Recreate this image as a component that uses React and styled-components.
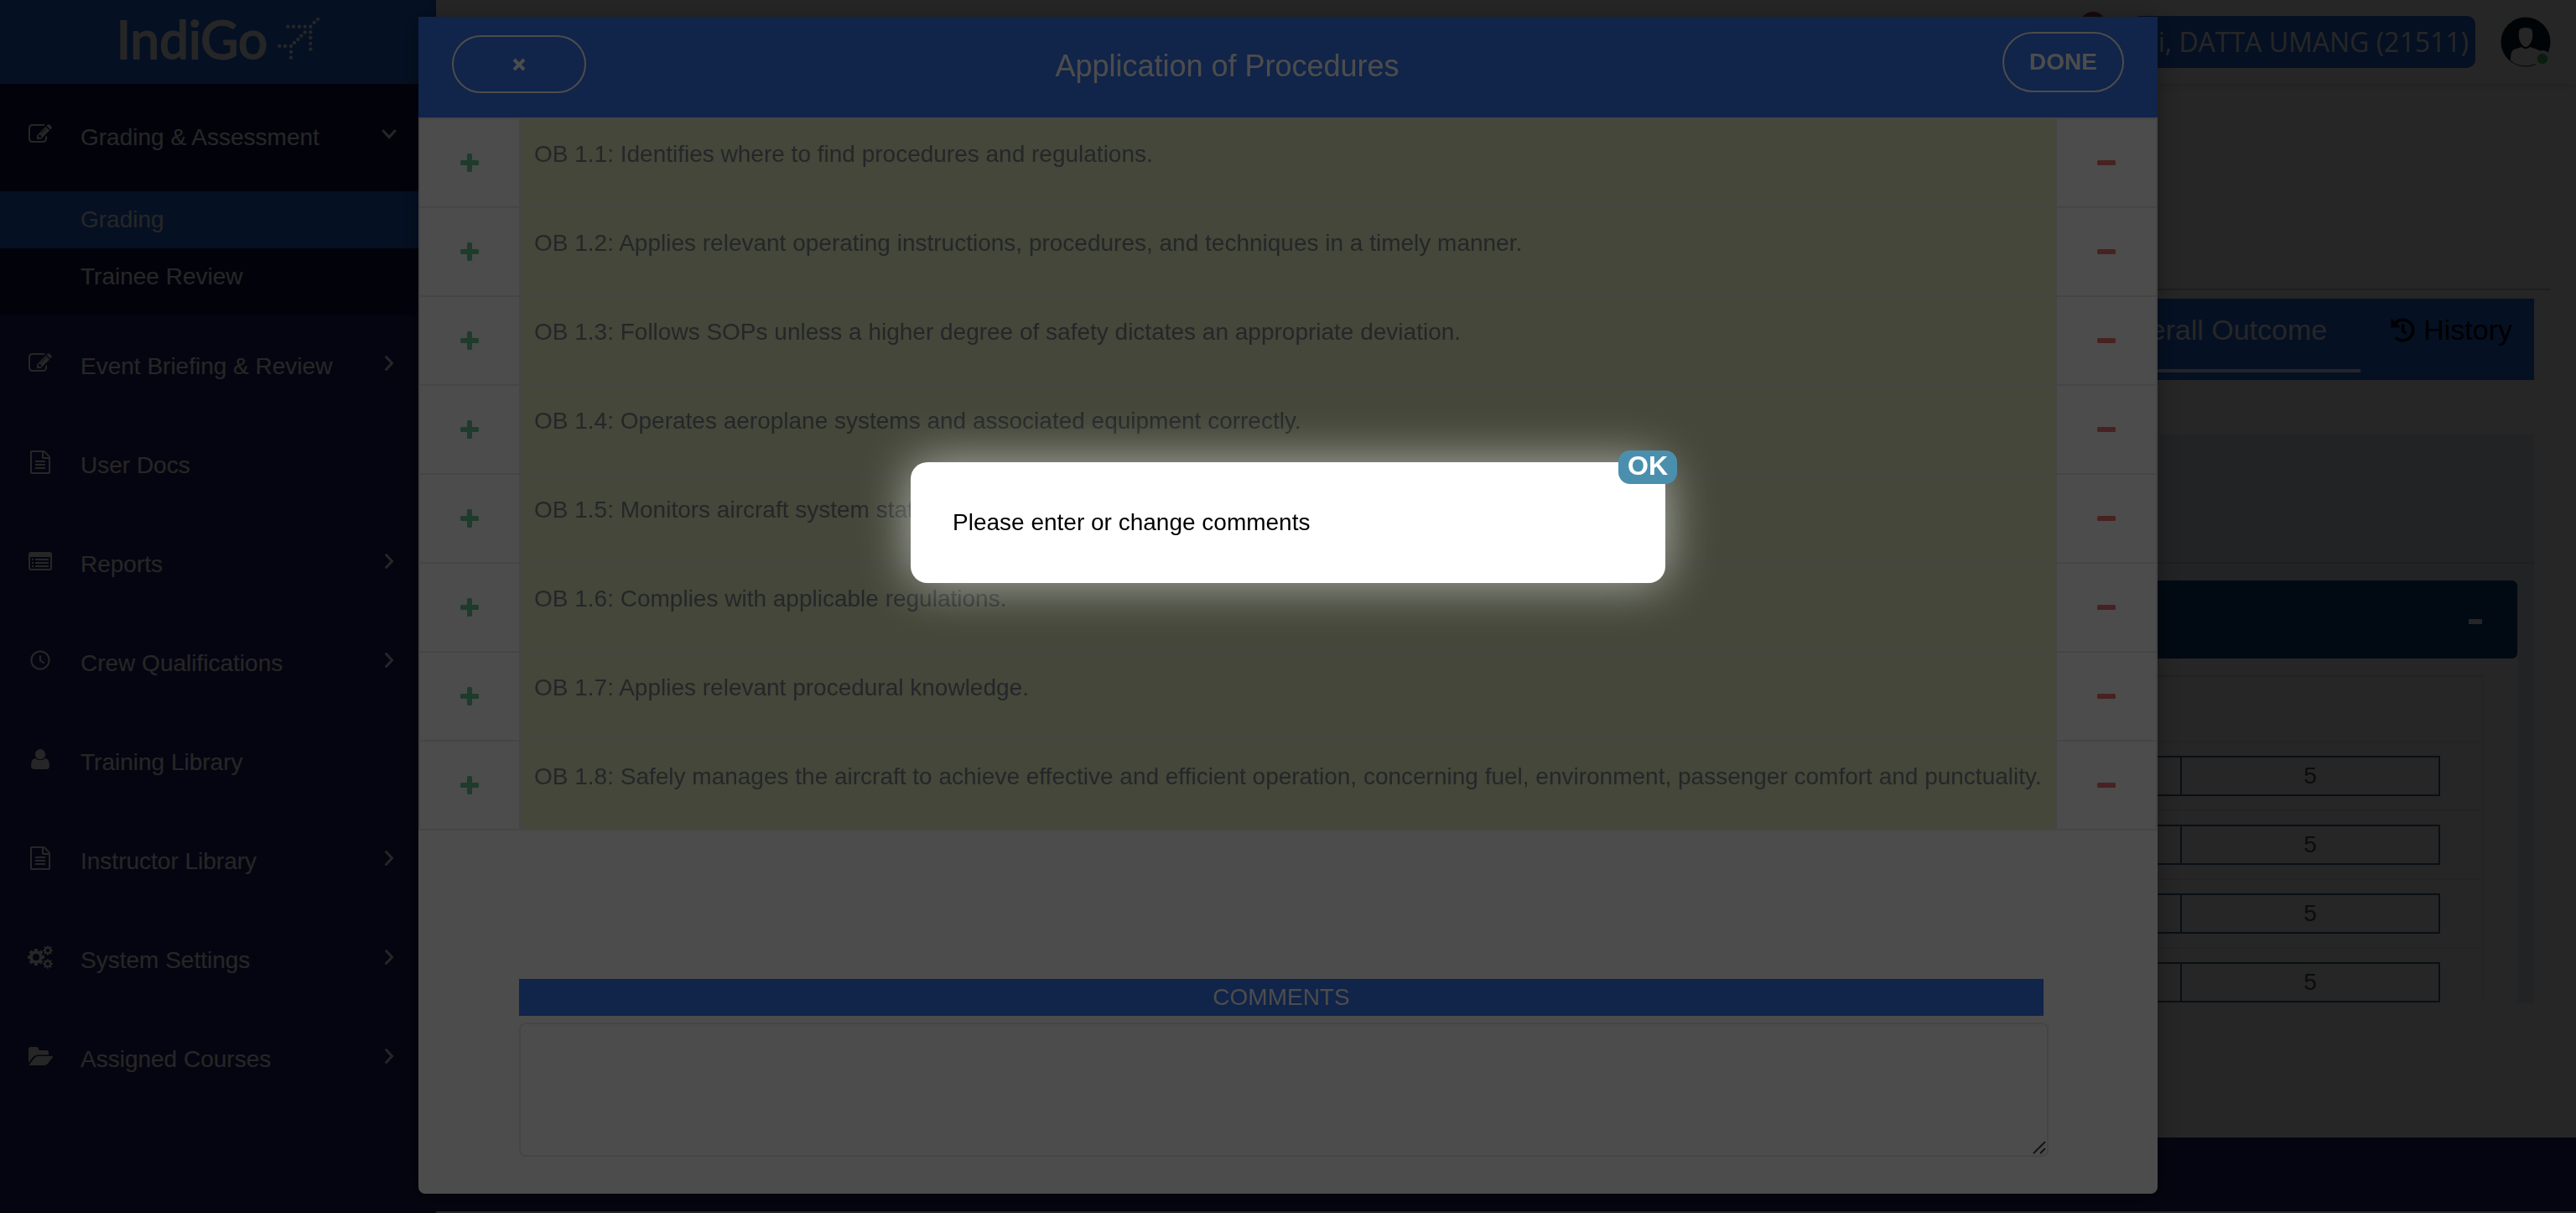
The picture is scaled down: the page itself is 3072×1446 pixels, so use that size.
import React from "react";
import styled, { createGlobalStyle } from "styled-components";
import { FaHistory } from "react-icons/fa";

const GlobalStyle = createGlobalStyle`
  * { box-sizing: border-box; }
  body {
    margin: 0;
    background: #fff;
    font-family: "Liberation Sans", Arial, Helvetica, sans-serif;
    font-size: 28px;
    line-height: 32px;
    color: #505050;
  }
  a { color: inherit; text-decoration: none; }
  button, textarea { font: inherit; }
`;

const color = {
  brand: "#226ce6",
  sidebar: "#242470",
  submenu: "#11114a",
  navy: "#0d437f",
  modalBlue: "#397bf5",
  panel: "#e3e9f0",
};

/* ---------- page shell ---------- */

const Shell = styled.div`
  display: flex;
  min-height: 100vh;
`;

const Sidebar = styled.aside`
  flex: 0 0 520px;
  background: ${color.sidebar};
  color: #fff;
`;

const Brand = styled.a`
  display: flex;
  align-items: center;
  justify-content: center;
  gap: 12px;
  height: 100px;
  padding-bottom: 8px;
  background: ${color.brand};
`;

const BrandName = styled.span`
  font-family: Lato, "Liberation Sans", sans-serif;
  font-size: 62px;
  line-height: 64px;
  -webkit-text-stroke: 2px #fff;
`;

const NavList = styled.ul`
  list-style: none;
  margin: 0;
  padding: 0;
`;

const NavLink = styled.a`
  display: flex;
  align-items: center;
  height: ${(p) => (p.$open ? "128px" : "118px")};
  padding: 0 46px 0 33px;
  background: ${(p) => (p.$open ? color.submenu : "transparent")};
`;

const NavIcon = styled.span`
  display: flex;
  flex: 0 0 30px;
  justify-content: center;
  margin: 0 33px 8px 0;
`;

const NavLabel = styled.span`
  flex: 1;
`;

const NavArrow = styled.span`
  display: flex;
  flex: 0 0 20px;
  justify-content: center;
  margin-bottom: 8px;
`;

const SubMenu = styled.ul`
  list-style: none;
  margin: 0 0 2px;
  padding: 0 0 12px;
  background: ${color.submenu};
`;

const SubLink = styled.a`
  display: flex;
  align-items: center;
  height: 68px;
  padding-left: 96px;
  background: ${(p) => (p.$active ? color.brand : "transparent")};
`;

const Main = styled.div`
  display: flex;
  flex: 1;
  flex-direction: column;
  min-width: 0;
`;

const TopBar = styled.header`
  display: flex;
  align-items: center;
  justify-content: flex-end;
  gap: 30px;
  height: 100px;
  padding: 0 30px;
  box-shadow: 0 2px 10px rgba(0, 0, 0, 0.15);
`;

const Bell = styled.span`
  align-self: flex-start;
  width: 32px;
  height: 32px;
  margin-top: 14px;
  border-radius: 50%;
  background: #a04040;
`;

const UserPill = styled.span`
  padding: 0 8px;
  border-radius: 10px;
  background: ${color.brand};
  color: #fff;
  font-family: "Open Sans", "Noto Sans", sans-serif;
  font-size: 32px;
  line-height: 62px;
`;

const Content = styled.main`
  flex: 1;
  padding: 244px 30px 160px;
`;

const Rule = styled.hr`
  height: 2px;
  margin: 0 0 10px;
  border: 0;
  background: #c6c6c6;
`;

const TabBar = styled.nav`
  display: flex;
  justify-content: flex-end;
  height: 97px;
  margin: 0 20px;
  padding-right: 26px;
  background: ${color.brand};
  font-size: 34px;
`;

const Tab = styled.a`
  display: flex;
  align-items: center;
  gap: 10px;
  height: 88px;
  padding: 0 ${(p) => (p.$active ? "40px" : "0")} 10px;
  margin-right: ${(p) => (p.$active ? "36px" : "0")};
  border-bottom: 4px solid ${(p) => (p.$active ? "#fff" : "transparent")};
  color: ${(p) => (p.$active ? "#fff" : "#000")};
`;

const Panel = styled.section`
  height: 678px;
  margin: 65px 20px 0;
  overflow: hidden;
  background: ${color.panel};
`;

const PanelHead = styled.div`
  height: 154px;
  border-bottom: 2px solid #cacfd6;
`;

const Group = styled.div`
  margin: 20px 20px 0;
  background: #fff;
`;

const GroupHead = styled.div`
  display: flex;
  align-items: center;
  justify-content: flex-end;
  height: 93px;
  padding-right: 42px;
  border-radius: 6px;
  background: ${color.navy};
`;

const GroupToggle = styled.button`
  width: 16px;
  height: 6px;
  margin-top: 4px;
  padding: 0;
  border: 0;
  background: #fff;
`;

const Scores = styled.div`
  margin: 20px 40px 0;
  border: 2px solid #ececec;
  border-top-color: #e0e0e0;
`;

const ScoresHead = styled.div`
  height: 76px;
`;

const ScoreRow = styled.div`
  display: grid;
  grid-template-columns: 1fr 308px;
  padding: 16px 50px;
  border-top: 2px solid #e6e6e6;
  text-align: center;
`;

const ScoreCell = styled.div`
  height: 48px;
  border: 2px solid #40648c;
  line-height: 44px;

  & + & {
    border-left: 0;
  }
`;

const Footer = styled.footer`
  height: 90px;
  border-bottom: 2px solid #fff;
  background: ${color.sidebar};
`;

/* ---------- observations dialog ---------- */

const Backdrop = styled.div`
  position: fixed;
  inset: 0;
  display: flex;
  align-items: flex-start;
  justify-content: center;
  padding-top: 20px;
  background: rgba(0, 0, 0, 0.5);
`;

const Dialog = styled.section`
  width: 100%;
  max-width: 2074px;
  border-radius: 0 0 8px 8px;
  background: #fff;
  box-shadow: 0 4px 30px rgba(0, 0, 0, 0.35);
`;

const DialogHead = styled.header`
  display: flex;
  align-items: flex-start;
  height: 120px;
  padding: 18px 40px;
  background: ${color.modalBlue};
  color: #fff;
`;

const PillButton = styled.button`
  display: flex;
  align-items: center;
  justify-content: center;
  width: ${(p) => (p.$wide ? "160px" : "145px")};
  height: ${(p) => (p.$wide ? "69px" : "72px")};
  margin-top: ${(p) => (p.$wide ? "4px" : "0")};
  padding: 0;
  border: 2px solid #fff;
  border-radius: 36px;
  background: transparent;
  color: #fff;
  font-weight: bold;
`;

const DialogTitle = styled.h2`
  flex: 1;
  margin: 0;
  padding-right: 160px;
  font-size: 36px;
  font-weight: normal;
  line-height: 82px;
  text-align: center;
`;

const ObTable = styled.table`
  width: 100%;
  border-collapse: collapse;
  table-layout: fixed;

  td {
    height: 106px;
    padding: 0;
    border: 2px solid #e6e6ea;
    text-align: center;
    vertical-align: middle;
  }

  td:first-child,
  td:last-child {
    width: 119px;
  }

  td:nth-child(2) {
    padding: 20px 16px;
    background: #e3edbe;
    color: #7b7f8a;
    line-height: 44px;
    text-align: left;
    vertical-align: top;
    white-space: nowrap;
  }
`;

const MarkButton = styled.button`
  display: inline-flex;
  padding: 8px;
  border: 0;
  background: transparent;
  color: ${(p) => (p.$positive ? "#67c694" : "#f06e70")};
  vertical-align: top;
`;

const Comments = styled.div`
  padding: 177px 130px 44px 120px;
`;

const CommentsLabel = styled.label`
  display: block;
  margin: 0 6px 8px 0;
  background: ${color.modalBlue};
  color: #fff;
  line-height: 44px;
  text-align: center;
`;

const CommentsField = styled.div`
  position: relative;
`;

const CommentsBox = styled.textarea`
  display: block;
  width: 100%;
  height: 160px;
  padding: 12px;
  border: 2px solid #e6e6ea;
  border-radius: 8px;
  background: #fff;
  outline: none;
  resize: none;
`;

const Grip = styled.svg`
  position: absolute;
  right: 3px;
  bottom: 3px;
`;

/* ---------- alert ---------- */

const AlertLayer = styled.div`
  position: fixed;
  inset: 0;
  display: flex;
  align-items: flex-start;
  justify-content: center;
  padding-top: 551px;
  background: rgba(0, 0, 0, 0.7);
`;

const Alert = styled.div`
  position: relative;
  width: 900px;
  padding: 56px 50px;
  border-radius: 20px;
  background: #fff;
  box-shadow: 0 0 60px rgba(255, 255, 255, 0.6);
  color: #000;
`;

const AlertText = styled.p`
  margin: 0;
`;

const OkButton = styled.button`
  position: absolute;
  top: -14px;
  right: -14px;
  width: 70px;
  height: 40px;
  padding: 0 0 4px;
  border: 0;
  border-radius: 14px;
  background: #4a90ae;
  color: #fff;
  font-size: 32px;
  font-weight: bold;
  line-height: 36px;
`;

/* ---------- drawings ---------- */

const routeDots = [
  [7, 102], [27, 102], [48, 102], [48, 123], [48, 143], [60, 90], [73, 78],
  [85, 65], [98, 52], [37, 32], [57, 32], [78, 32], [98, 32], [118, 32],
  [131, 18], [144, 6], [118, 52], [118, 72], [118, 93], [118, 113],
];

const Plane = () => (
  <svg width="50" height="50" viewBox="0 0 150 150" fill="#fff" aria-hidden="true">
    {routeDots.map(([x, y]) => (
      <circle key={`${x}-${y}`} cx={x} cy={y} r="6.5" />
    ))}
  </svg>
);

const EditIcon = () => (
  <svg width="28" height="28" viewBox="0 0 1792 1792" fill="currentColor" aria-hidden="true">
    <path d="M888 1184l116-116-152-152-116 116v56h96v96h56zm440-720q-16-16-33 1l-350 350q-17 17-1 33t33-1l350-350q17-17 1-33zm80 594v190q0 119-84.5 203.5t-203.5 84.5h-832q-119 0-203.5-84.5t-84.5-203.5v-832q0-119 84.5-203.5t203.5-84.5h832q63 0 117 25 15 7 18 23 3 17-9 29l-49 49q-14 14-32 8-23-6-45-6h-832q-66 0-113 47t-47 113v832q0 66 47 113t113 47h832q66 0 113-47t47-113v-126q0-13 9-22l64-64q15-15 35-7t20 29zm-96-738l288 288-672 672h-288v-288zm444 132l-92 92-288-288 92-92q28-28 68-28t68 28l152 152q28 28 28 68t-28 68z" />
  </svg>
);

const FileIcon = () => (
  <svg width="28" height="28" viewBox="0 0 1792 1792" fill="currentColor" aria-hidden="true">
    <path d="M1596 380q28 28 48 76t20 88v1152q0 40-28 68t-68 28h-1344q-40 0-68-28t-28-68v-1600q0-40 28-68t68-28h896q40 0 88 20t76 48zm-444-244v376h376q-10-29-22-41l-313-313q-12-12-41-22zm384 1528v-1024h-416q-40 0-68-28t-28-68v-416h-768v1536h1280zm-1024-864q0-14 9-23t23-9h704q14 0 23 9t9 23v64q0 14-9 23t-23 9h-704q-14 0-23-9t-9-23v-64zm736 224q14 0 23 9t9 23v64q0 14-9 23t-23 9h-704q-14 0-23-9t-9-23v-64q0-14 9-23t23-9h704zm0 256q14 0 23 9t9 23v64q0 14-9 23t-23 9h-704q-14 0-23-9t-9-23v-64q0-14 9-23t23-9h704z" />
  </svg>
);

const ListIcon = () => (
  <svg width="28" height="22" viewBox="0 0 28 22" fill="currentColor" aria-hidden="true">
    <path fillRule="evenodd" d="M3 0h22a3 3 0 0 1 3 3v16a3 3 0 0 1-3 3H3a3 3 0 0 1-3-3V3a3 3 0 0 1 3-3zM2 6v13q0 1 1 1h22q1 0 1-1V6z" />
    {[8, 12, 16].map((y) => (
      <path key={y} d={`M4 ${y}h2v2H4zM8 ${y}h16v2H8z`} />
    ))}
  </svg>
);

const ClockIcon = () => (
  <svg width="24" height="24" viewBox="0 0 24 24" fill="none" stroke="currentColor" strokeWidth="2" aria-hidden="true">
    <circle cx="12" cy="12" r="10.6" />
    <path d="M12 6.5v6l5 3" />
  </svg>
);

const UserIcon = () => (
  <svg width="22" height="24" viewBox="0 0 22 24" fill="currentColor" aria-hidden="true">
    <circle cx="11" cy="6.2" r="6.1" />
    <path d="M5 11q2.5 2.3 6 2.3t6-2.3q5 0.5 5 9 0 4-4 4H4q-4 0-4-4 0-8.5 5-9z" />
  </svg>
);

const Gear = ({ x, y, outer, body, hole, tooth }) => (
  <g transform={`translate(${x} ${y})`}>
    <circle r={(body + hole) / 2} fill="none" stroke="currentColor" strokeWidth={body - hole} />
    {[0, 45, 90, 135, 180, 225, 270, 315].map((a) => (
      <rect key={a} x={-tooth / 2} y={-outer} width={tooth} height={outer - body + 1} rx="0.5" transform={`rotate(${a})`} />
    ))}
  </g>
);

const CogsIcon = () => (
  <svg width="30" height="28" viewBox="0 0 30 28" fill="currentColor" aria-hidden="true">
    <Gear x={10} y={14} outer={10} body={7.8} hole={4} tooth={4} />
    <Gear x={24} y={6} outer={5.8} body={4.4} hole={2.2} tooth={2} />
    <Gear x={24} y={22} outer={5.8} body={4.4} hole={2.2} tooth={2} />
  </svg>
);

const FolderIcon = () => (
  <svg width="29" height="22" viewBox="0 0 29 22" fill="currentColor" aria-hidden="true">
    <path d="M0 19V3a3 3 0 0 1 3-3h6a3 3 0 0 1 3 3v1h9a3 3 0 0 1 3 3v2.5H11q-3.5 0-5.5 2.5z" />
    <path d="M1 21l6-7.8Q8.8 11 11.5 11h16.7q1.3 0.4 0.3 1.8L23 20q-1.7 2-4.3 2H2q-1.5 0-1-1z" />
  </svg>
);

const Chevron = ({ down }) =>
  down ? (
    <svg width="20" height="14" viewBox="0 0 20 14" fill="none" stroke="currentColor" strokeWidth="3" strokeLinecap="round" aria-hidden="true">
      <path d="M3 3l7 7.5 7-7.5" />
    </svg>
  ) : (
    <svg width="12" height="20" viewBox="0 0 12 20" fill="none" stroke="currentColor" strokeWidth="3" strokeLinecap="round" aria-hidden="true">
      <path d="M2.500 2.500L9.500 10l-7 7.500" />
    </svg>
  );

const PlusIcon = () => (
  <svg width="22" height="22" viewBox="0 0 22 22" fill="currentColor" aria-hidden="true">
    <path d="M8 1.500Q8 0 9.500 0h3Q14 0 14 1.500V8h6.500Q22 8 22 9.500v3q0 1.500-1.500 1.500H14v6.500q0 1.500-1.500 1.500h-3Q8 22 8 20.500V14H1.500Q0 14 0 12.500v-3Q0 8 1.500 8H8z" />
  </svg>
);

const MinusIcon = () => (
  <svg width="22" height="22" viewBox="0 0 22 22" fill="currentColor" aria-hidden="true">
    <rect x="0" y="8" width="22" height="6" rx="1.5" />
  </svg>
);

const CrossIcon = () => (
  <svg width="16" height="16" viewBox="0 0 16 16" stroke="currentColor" strokeWidth="4" aria-hidden="true">
    <path d="M2 2l12 12M14 2L2 14" />
  </svg>
);

const Avatar = () => (
  <svg width="60" height="60" viewBox="0 0 60 60" role="img" aria-label="User profile">
    <circle cx="30" cy="30" r="29.5" fill="#0a1c34" />
    <path d="M22 18q0-5 8-5t8 5q1 8-2 13-3 5-6 5t-6-5q-3-5-2-13z" fill="#fff" />
    <path d="M12 52q0-12 4-13l9-3q5 4.5 10 0l9 3q5 1 5 14l-7 3q-6 2.5-13 2.5-10 0-17-6.5z" fill="#fff" />
    <circle cx="50" cy="50" r="10" fill="#fff" />
    <circle cx="50" cy="50" r="6.2" fill="#4cb874" />
  </svg>
);

/* ---------- data ---------- */

const navItems = [
  { label: "Event Briefing & Review", Icon: EditIcon, arrow: true },
  { label: "User Docs", Icon: FileIcon },
  { label: "Reports", Icon: ListIcon, arrow: true },
  { label: "Crew Qualifications", Icon: ClockIcon, arrow: true },
  { label: "Training Library", Icon: UserIcon },
  { label: "Instructor Library", Icon: FileIcon, arrow: true },
  { label: "System Settings", Icon: CogsIcon, arrow: true },
  { label: "Assigned Courses", Icon: FolderIcon, arrow: true },
];

const behaviours = [
  "OB 1.1: Identifies where to find procedures and regulations.",
  "OB 1.2: Applies relevant operating instructions, procedures, and techniques in a timely manner.",
  "OB 1.3: Follows SOPs unless a higher degree of safety dictates an appropriate deviation.",
  "OB 1.4: Operates aeroplane systems and associated equipment correctly.",
  "OB 1.5: Monitors aircraft system status.",
  "OB 1.6: Complies with applicable regulations.",
  "OB 1.7: Applies relevant procedural knowledge.",
  "OB 1.8: Safely manages the aircraft to achieve effective and efficient operation, concerning fuel, environment, passenger comfort and punctuality.",
];

const scoreRows = [5, 5, 5, 5];

const NavItem = ({ label, Icon, arrow, open }) => (
  <NavLink href="#" $open={open}>
    <NavIcon>
      <Icon />
    </NavIcon>
    <NavLabel>{label}</NavLabel>
    {arrow && (
      <NavArrow>
        <Chevron down={open} />
      </NavArrow>
    )}
  </NavLink>
);

export default function App() {
  return (
    <>
      <GlobalStyle />
      <Shell>
        <Sidebar>
          <Brand href="#">
            <BrandName>IndiGo</BrandName>
            <Plane />
          </Brand>
          <NavList>
            <li>
              <NavItem label="Grading & Assessment" Icon={EditIcon} arrow open />
              <SubMenu>
                <li>
                  <SubLink href="#" $active>Grading</SubLink>
                </li>
                <li>
                  <SubLink href="#">Trainee Review</SubLink>
                </li>
              </SubMenu>
            </li>
            {navItems.map((item) => (
              <li key={item.label}>
                <NavItem {...item} />
              </li>
            ))}
          </NavList>
        </Sidebar>
        <Main>
          <TopBar>
            <Bell />
            <UserPill>Hi, DATTA UMANG (21511)</UserPill>
            <Avatar />
          </TopBar>
          <Content>
            <Rule />
            <TabBar>
              <Tab href="#" $active>Overall Outcome</Tab>
              <Tab href="#">
                <FaHistory size={29} aria-hidden="true" />
                History
              </Tab>
            </TabBar>
            <Panel>
              <PanelHead />
              <Group>
                <GroupHead>
                  <GroupToggle aria-label="Collapse" />
                </GroupHead>
                <Scores>
                  <ScoresHead />
                  {scoreRows.map((score, i) => (
                    <ScoreRow key={i}>
                      <ScoreCell />
                      <ScoreCell>{score}</ScoreCell>
                    </ScoreRow>
                  ))}
                </Scores>
              </Group>
            </Panel>
          </Content>
          <Footer />
        </Main>
      </Shell>

      <Backdrop>
        <Dialog role="dialog" aria-labelledby="dialog-title">
          <DialogHead>
            <PillButton $wide aria-label="Close">
              <CrossIcon />
            </PillButton>
            <DialogTitle id="dialog-title">Application of Procedures</DialogTitle>
            <PillButton>DONE</PillButton>
          </DialogHead>
          <ObTable>
            <colgroup>
              <col width="120" />
              <col />
              <col width="120" />
            </colgroup>
            <tbody>
              {behaviours.map((text) => (
                <tr key={text}>
                  <td>
                    <MarkButton $positive aria-label="Observed">
                      <PlusIcon />
                    </MarkButton>
                  </td>
                  <td>{text}</td>
                  <td>
                    <MarkButton aria-label="Not observed">
                      <MinusIcon />
                    </MarkButton>
                  </td>
                </tr>
              ))}
            </tbody>
          </ObTable>
          <Comments>
            <CommentsLabel htmlFor="comments">COMMENTS</CommentsLabel>
            <CommentsField>
              <CommentsBox id="comments" />
              <Grip width="16" height="16" viewBox="0 0 16 16" stroke="#444" strokeWidth="2" aria-hidden="true">
                <path d="M1 15L15 1M9 15l6-6" />
              </Grip>
            </CommentsField>
          </Comments>
        </Dialog>
      </Backdrop>

      <AlertLayer>
        <Alert role="alertdialog" aria-describedby="alert-text">
          <AlertText id="alert-text">Please enter or change comments</AlertText>
          <OkButton>OK</OkButton>
        </Alert>
      </AlertLayer>
    </>
  );
}
